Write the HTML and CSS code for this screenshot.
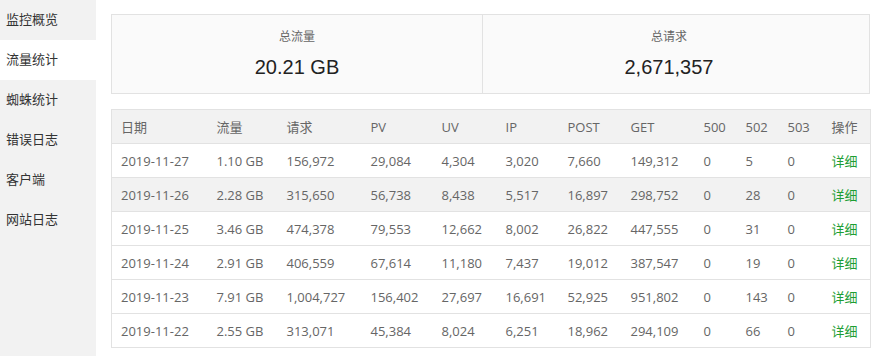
FILE: index.html
```html
<!DOCTYPE html>
<html>
<head>
<meta charset="utf-8">
<meta name="viewport" content="width=device-width, initial-scale=1">
<link rel="stylesheet" href="styles.css">
</head>
<body>

<div class="page">
  <ul class="side">
    <li>监控概览</li>
    <li class="active">流量统计</li>
    <li>蜘蛛统计</li>
    <li>错误日志</li>
    <li>客户端</li>
    <li>网站日志</li>
  </ul>

  <div class="main">
    <div class="total">
      <div class="cell first">
        <p class="label">总流量</p>
        <p class="value">20.21 GB</p>
      </div>
      <div class="cell">
        <p class="label">总请求</p>
        <p class="value">2,671,357</p>
      </div>
    </div>

    <table class="stat">
      <colgroup>
        <col style="width:96px"><col style="width:70px"><col style="width:84px"><col style="width:71px">
        <col style="width:64px"><col style="width:62px"><col style="width:63px"><col style="width:73px">
        <col style="width:42px"><col style="width:42px"><col style="width:44px"><col style="width:48px">
      </colgroup>
      <thead>
        <tr><th>日期</th><th>流量</th><th>请求</th><th>PV</th><th>UV</th><th>IP</th><th>POST</th><th>GET</th><th>500</th><th>502</th><th>503</th><th>操作</th></tr>
      </thead>
      <tbody>
        <tr><td>2019-11-27</td><td>1.10 GB</td><td>156,972</td><td>29,084</td><td>4,304</td><td>3,020</td><td>7,660</td><td>149,312</td><td>0</td><td>5</td><td>0</td><td><a href="#">详细</a></td></tr>
        <tr class="hover"><td>2019-11-26</td><td>2.28 GB</td><td>315,650</td><td>56,738</td><td>8,438</td><td>5,517</td><td>16,897</td><td>298,752</td><td>0</td><td>28</td><td>0</td><td><a href="#">详细</a></td></tr>
        <tr><td>2019-11-25</td><td>3.46 GB</td><td>474,378</td><td>79,553</td><td>12,662</td><td>8,002</td><td>26,822</td><td>447,555</td><td>0</td><td>31</td><td>0</td><td><a href="#">详细</a></td></tr>
        <tr><td>2019-11-24</td><td>2.91 GB</td><td>406,559</td><td>67,614</td><td>11,180</td><td>7,437</td><td>19,012</td><td>387,547</td><td>0</td><td>19</td><td>0</td><td><a href="#">详细</a></td></tr>
        <tr><td>2019-11-23</td><td>7.91 GB</td><td>1,004,727</td><td>156,402</td><td>27,697</td><td>16,691</td><td>52,925</td><td>951,802</td><td>0</td><td>143</td><td>0</td><td><a href="#">详细</a></td></tr>
        <tr><td>2019-11-22</td><td>2.55 GB</td><td>313,071</td><td>45,384</td><td>8,024</td><td>6,251</td><td>18,962</td><td>294,109</td><td>0</td><td>66</td><td>0</td><td><a href="#">详细</a></td></tr>
      </tbody>
    </table>
  </div>
</div>

</body>
</html>
```

FILE: styles.css
```css
body {
  margin: 0;
  font-family: "Open Sans", "Noto Sans CJK SC", sans-serif;
  color: #666;
}

* {
  box-sizing: border-box;
}

.page {
  display: flex;
  height: 356px;
}

/* left menu */
.side {
  width: 96px;
  margin: 0;
  padding: 0;
  list-style: none;
  background: #f2f2f2;
}

.side li {
  height: 40px;
  line-height: 38px;
  padding-left: 6px;
  font-size: 13px;
  color: #333;
}

.side li.active {
  background: #fff;
}

.main {
  padding: 14px 0 0 15px;
  width: 774px;
}

/* totals */
.total {
  display: flex;
  height: 80px;
  border: 1px solid #e2e2e2;
  background: #fafafa;
}

.total .cell {
  flex: 1;
  text-align: center;
  padding-right: 14px;
}

.total .cell.first {
  flex: none;
  width: 371px;
  padding-right: 0;
  border-right: 1px solid #e2e2e2;
}

.label {
  margin: 13px 0 0;
  font-size: 12px;
  line-height: 18px;
  color: #666;
}

.value {
  margin: 9px 0 0;
  font-family: "Liberation Sans", Arial, sans-serif;
  font-size: 20px;
  line-height: 24px;
  color: #222;
}

/* table */
.stat {
  margin-top: 15px;
  width: 759px;
  border-collapse: collapse;
  table-layout: fixed;
  border: 1px solid #e2e2e2;
  font-size: 13px;
}

.stat th,
.stat td {
  height: 34px;
  padding: 0 0 0 9px;
  text-align: left;
  font-weight: normal;
  border-bottom: 1px solid #e2e2e2;
  white-space: nowrap;
}

.stat thead tr {
  background: #f2f2f2;
}

.stat tr.hover {
  background: #f2f2f2;
}

.stat a {
  color: #1e9e34;
  text-decoration: none;
}
```
